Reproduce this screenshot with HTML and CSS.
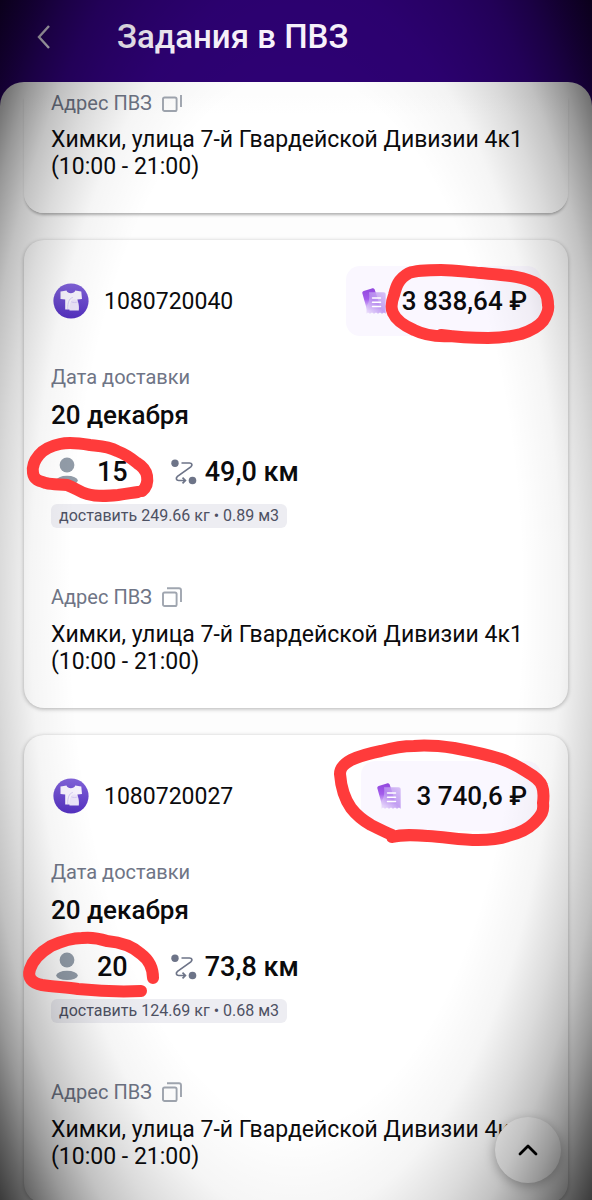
FILE: index.html
```html
<!DOCTYPE html>
<html lang="ru">
<head>
<meta charset="utf-8">
<meta name="viewport" content="width=device-width, initial-scale=1">
<title>Задания в ПВЗ</title>
<link rel="stylesheet" href="styles.css">
</head>
<body>
<svg class="defs" aria-hidden="true">
  <defs>
    <linearGradient id="badge" x1="0" y1="0" x2="0" y2="1"><stop offset="0" stop-color="#8062d8"/><stop offset="1" stop-color="#5330bf"/></linearGradient>
    <linearGradient id="ticket" x1="0" y1="0" x2="0" y2="1"><stop offset="0" stop-color="#9248dd"/><stop offset=".5" stop-color="#a35cec"/><stop offset="1" stop-color="#ecdcfd"/></linearGradient>
    <linearGradient id="receipt" x1="1" y1="0" x2="0" y2="1"><stop offset="0" stop-color="#d3baf5"/><stop offset=".5" stop-color="#b88fef"/><stop offset="1" stop-color="#eadcfc"/></linearGradient>
    <symbol id="i-shirt" viewBox="0 0 36 36">
      <circle cx="18" cy="18" r="17.6" fill="url(#badge)"/>
      <path d="M7.500 8.600c2.500-.2 4-.9 6-1 1 3.600 7.600 3.600 8.800 0 2 .2 3.700.9 6 1l.7 7.400-4.600.6v9.800H12.200v-9.800l-4.700-.6z" fill="#f6f2fd"/>
      <path d="M16.500 27.500c-.6-3.500.2-6.500 1.500-8.800.8-3.200 6.200-3.200 7 0 .9 2.600 1.200 5.500.8 8.800z" fill="#ece5fa"/>
      <path d="M14.800 26c-.2-6 1-10.500 5-11.500M18.300 18.800c1.500.9 5 .9 6.500 0" fill="none" stroke="#cbbff0" stroke-width=".8"/>
    </symbol>
    <symbol id="i-receipt" viewBox="0 0 24 26">
      <path d="M.4 5.500C0 4.300.5 3.400 1.700 2.900L9.800.4c1.300-.4 2.300 0 2.900 1.200L19 21 5 22z" fill="url(#ticket)"/>
      <path d="M7 4.300h14.500c1.500 0 2.200.8 2.200 2.200v19.200l-1.700-1.200-2 1.200-2-1.200-2 1.200-2-1.200-2 1.200-2-1.200-2 1.200-2-1.200-1.500 1.200V18C7.500 15 7.500 9 7 4.300z" fill="url(#receipt)" fill-opacity=".85"/>
      <path d="M10.500 10h8M10.500 14.300h8M10.500 18.600h8" stroke="#fff" stroke-width="1.500" stroke-linecap="round"/>
    </symbol>
    <symbol id="i-person" viewBox="0 0 24 30">
      <circle cx="12" cy="8" r="7.400" fill="#929ca8"/>
      <ellipse cx="12" cy="23.400" rx="10.800" ry="4.600" fill="#929ca8"/>
    </symbol>
    <symbol id="i-route" viewBox="0 0 26 26">
      <circle cx="4" cy="4.200" r="3.700" fill="#6d7488"/>
      <circle cx="21.500" cy="21.500" r="3.800" fill="#6d7488"/>
      <path d="M10.500 4h8c2.600 0 3.200 2.200 1.300 3.900L6.500 17.300c-2 1.700-1.300 4.200 1.200 4.200h6.300M11.500 18.700l2.900 2.800-2.900 2.800" fill="none" stroke="#6d7488" stroke-width="1.700"/>
    </symbol>
    <symbol id="i-copy" viewBox="0 0 20 20">
      <rect x="1" y="5.500" width="13.600" height="13.500" rx="1.600" fill="none" stroke="#a0a6b0" stroke-width="1.900"/>
      <path d="M5 1.200h12c1.200 0 2 .8 2 2V15" fill="none" stroke="#a0a6b0" stroke-width="1.900"/>
    </symbol>
  </defs>
</svg>

<div class="app">
  <header class="header">
    <button class="back" aria-label="Назад"><svg width="16" height="26" viewBox="0 0 16 26"><path d="M13 2 3 13l10 11" fill="none" stroke="#f3edfb" stroke-width="2.400"/></svg></button>
    <h1 class="title">Задания в ПВЗ</h1>
  </header>

  <main class="sheet">
    <div class="list">
      <article class="card card-cut">
        <div class="label">Адрес ПВЗ <button class="copy" aria-label="Скопировать"><svg class="icon-copy"><use href="#i-copy"/></svg></button></div>
        <p class="address">Химки, улица 7-й Гвардейской Дивизии 4к1<br>(10:00 - 21:00)</p>
      </article>

      <article class="card">
        <div class="top">
          <svg class="icon-shirt"><use href="#i-shirt"/></svg>
          <span class="number">1080720040</span>
          <div class="price">
            <svg class="icon-receipt"><use href="#i-receipt"/></svg>
            <span>3 838,64 ₽</span>
            <svg class="mark mark-price-a" viewBox="380 260 180 90" aria-hidden="true"><path d="M440 335C455 337 472 338 487 338 502 338 512 336 520 334 532 330 538 326 542 321 547 313 548 309 547 305 547 294 543 289 536 284 524 276 502 275 480 273 465 272 455 270 440 270 428 270 416 270 408 273 397 279 395 287 393 295 390 303 390 309 392 313 395 320 404 326 413 330 421 334 434 337 450 336"/></svg>
          </div>
        </div>
        <div class="label label-date">Дата доставки</div>
        <div class="date">20 декабря</div>
        <div class="stats">
          <span class="people"><svg class="icon-person"><use href="#i-person"/></svg>15</span>
          <span class="distance"><svg class="icon-route"><use href="#i-route"/></svg>49,0 км</span>
          <svg class="mark mark-stats-a" viewBox="24 434 136 68" aria-hidden="true"><path d="M142 491C147 487 148 482 147 476 146 470 142 466 137 463 131 458 125 454 117 451 108 446 99 446 90 445 78 443 69 442 60 444 50 446 44 449 39 455 33 462 32 467 33 473 34 480 39 481 46 483 53 485 60 484 67 485 76 488 79 492 87 494 98 497 108 496 118 495 126 494 131 493 138 492"/></svg>
        </div>
        <div class="tag">доставить 249.66 кг • 0.89 м3</div>
        <div class="label label-address">Адрес ПВЗ <button class="copy" aria-label="Скопировать"><svg class="icon-copy"><use href="#i-copy"/></svg></button></div>
        <p class="address">Химки, улица 7-й Гвардейской Дивизии 4к1<br>(10:00 - 21:00)</p>
      </article>

      <article class="card">
        <div class="top">
          <svg class="icon-shirt"><use href="#i-shirt"/></svg>
          <span class="number">1080720027</span>
          <div class="price">
            <svg class="icon-receipt"><use href="#i-receipt"/></svg>
            <span>3 740,6 ₽</span>
            <svg class="mark mark-price-b" viewBox="330 735 230 115" aria-hidden="true"><path d="M391 837C402 834 414 835 427 836 445 837 460 840 477 840 489 840 498 839 507 836 519 833 527 829 533 823 541 815 543 811 542 803 543 795 543 791 541 786 539 780 533 776 526 772 517 766 509 762 500 759 484 754 469 751 453 748 439 746 425 745 413 746 402 746 391 748 380 751 370 753 359 756 350 760 341 765 339 769 339 774 340 787 343 798 350 808 357 817 363 821 370 825 378 829 384 832 391 835"/></svg>
          </div>
        </div>
        <div class="label label-date">Дата доставки</div>
        <div class="date">20 декабря</div>
        <div class="stats">
          <span class="people"><svg class="icon-person"><use href="#i-person"/></svg>20</span>
          <span class="distance"><svg class="icon-route"><use href="#i-route"/></svg>73,8 км</span>
          <svg class="mark mark-stats-b" viewBox="20 924 150 76" aria-hidden="true"><path d="M153 978C153 968 149 960 141 954 131 945 119 942 107 941 98 938 90 937 82 938 70 938 60 942 51 946 41 952 33 960 30 969 27 978 32 983 42 985 54 987 66 987 78 989 98 991 120 992 141 991"/></svg>
        </div>
        <div class="tag">доставить 124.69 кг • 0.68 м3</div>
        <div class="label label-address">Адрес ПВЗ <button class="copy" aria-label="Скопировать"><svg class="icon-copy"><use href="#i-copy"/></svg></button></div>
        <p class="address">Химки, улица 7-й Гвардейской Дивизии 4к1<br>(10:00 - 21:00)</p>
      </article>
    </div>
  </main>

  <button class="to-top" aria-label="Наверх"><svg width="20" height="14" viewBox="0 0 20 14"><path d="m2 11 8-8 8 8" fill="none" stroke="#000" stroke-width="2.800" stroke-linecap="round" stroke-linejoin="round"/></svg></button>
  <div class="vignette"></div>
</div>
</body>
</html>
```

FILE: styles.css
```css
* { box-sizing: border-box; }

body {
  margin: 0;
  font-family: Roboto, "Noto Sans", sans-serif;
  color: #0b0b0d;
}

.defs { position: absolute; width: 0; height: 0; }

button {
  padding: 0;
  border: 0;
  background: none;
  cursor: pointer;
}

.app {
  position: relative;
  display: flex;
  flex-direction: column;
  height: 100vh;
  overflow: hidden;
  background: #2d0173;
}

.header {
  display: flex;
  align-items: center;
  gap: 65px;
  padding: 12px 36px 20px;
}

.back { display: flex; }

.title {
  margin: 0;
  font-size: 33px;
  font-weight: 500;
  line-height: 50px;
  color: #fbf5ff;
}

.sheet {
  flex: 1;
  min-height: 0;
  display: flex;
  flex-direction: column;
  padding-top: 8px;
  border-radius: 24px 24px 0 0;
  background: #fdfdfd;
}

.list {
  flex: 1;
  min-height: 0;
  overflow: hidden;
  padding: 5px 24px 0;
}

.card {
  margin-bottom: 27px;
  padding: 26px 27px 33px;
  border-radius: 20px;
  background: #fff;
  box-shadow: 0 1px 4px rgba(0, 0, 0, 0.3);
}

.card-cut {
  padding-top: 0;
  border-radius: 0 0 20px 20px;
  background: linear-gradient(#fdfdfd, #fff 20px);
  box-shadow: 0 3px 3px -1px rgba(0, 0, 0, 0.3);
}

.card-cut .label { height: 16px; }
.card-cut .address { margin-top: 15px; }

.card-cut .copy {
  align-items: flex-end;
  height: 17px;
  overflow: hidden;
}

.card-cut .icon-copy { flex: none; }

.top {
  display: flex;
  align-items: center;
}

.icon-shirt { width: 36px; height: 36px; margin: 0 15px 0 2px; }

.number { font-size: 23px; }

.price {
  position: relative;
  display: flex;
  align-items: center;
  gap: 16px;
  height: 70px;
  margin-left: auto;
  padding: 0 14px 0 16px;
  border-radius: 14px;
  background: #faf7ff;
  font-size: 26px;
  font-weight: 500;
}

.icon-receipt { width: 24px; height: 26px; }

.label {
  display: flex;
  align-items: center;
  gap: 10px;
  font-size: 20px;
  line-height: 24px;
  color: #6f7586;
}

.label-date { margin-top: 29px; }
.label-address { margin-top: 57px; }

.copy { display: flex; }
.icon-copy { width: 20px; height: 20px; }

.date {
  margin-top: 10px;
  font-size: 26px;
  font-weight: 500;
  line-height: 32px;
}

.stats {
  position: relative;
  display: flex;
  align-items: center;
  gap: 43px;
  height: 36px;
  margin-top: 23px;
  font-size: 27px;
  font-weight: 500;
}

.people, .distance { display: flex; align-items: center; }
.people { gap: 18px; padding-left: 4px; }
.distance { gap: 8px; }
.icon-person { width: 24px; height: 30px; }
.icon-route { width: 26px; height: 26px; }

.tag {
  width: fit-content;
  margin-top: 14px;
  padding: 0 8px;
  border-radius: 6px;
  background: #ededf2;
  font-size: 16px;
  line-height: 24px;
  color: #4d5163;
}

.address {
  margin: 12px 0 0;
  font-size: 23px;
  line-height: 27px;
}

.mark {
  position: absolute;
  z-index: 2;
  fill: none;
  stroke: #ff3b3b;
  stroke-width: 12px;
  stroke-linecap: round;
  stroke-linejoin: round;
  pointer-events: none;
}

.mark-price-a { right: -20px; top: -6px; width: 180px; height: 90px; }
.mark-price-b { right: -20px; top: -26px; width: 230px; height: 115px; }
.mark-stats-a { left: -27px; top: -20px; width: 136px; height: 68px; }
.mark-stats-b { left: -31px; top: -25px; width: 150px; height: 76px; }

.to-top {
  position: absolute;
  right: 31px;
  bottom: 17px;
  display: flex;
  align-items: center;
  justify-content: center;
  width: 66px;
  height: 66px;
  border-radius: 50%;
  background: #fff;
  box-shadow: 0 3px 12px rgba(0, 0, 0, 0.3);
}

.vignette {
  position: absolute;
  inset: 0;
  z-index: 1;
  pointer-events: none;
  background: radial-gradient(ellipse 68% 78% at 50% 50%, transparent 56%, rgba(0, 0, 0, 0.04) 66%, rgba(0, 0, 0, 0.14) 74%, rgba(0, 0, 0, 0.24) 80%, rgba(0, 0, 0, 0.4) 86%, rgba(0, 0, 0, 0.6) 92%, rgba(0, 0, 0, 0.78) 98%);
}
```
